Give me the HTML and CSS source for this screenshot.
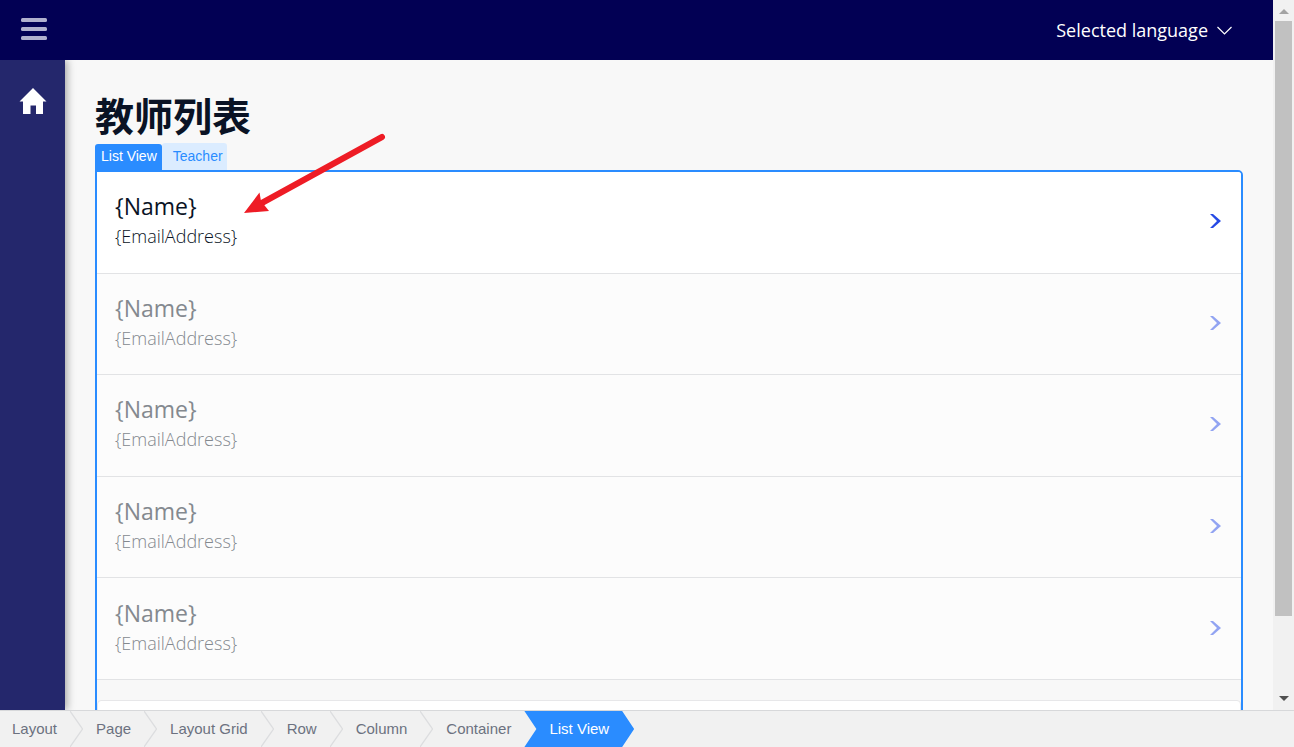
FILE: index.html
```html
<!DOCTYPE html>
<html lang="zh-CN">
<head>
<meta charset="utf-8">
<meta name="viewport" content="width=device-width, initial-scale=1">
<title>教师列表</title>
<link rel="stylesheet" href="styles.css">
</head>
<body>
<div class="editor">
  <div class="viewport">
    <div class="page">
      <header class="topbar">
        <button class="icon-button" type="button" aria-label="Toggle menu">
          <svg width="26" height="24" viewBox="0 0 26 24" fill="#b0b0ce"><rect x="0" y="0" width="26" height="4" rx="1.5"/><rect x="0" y="9" width="26" height="4" rx="1.5"/><rect x="0" y="18" width="26" height="4" rx="1.5"/></svg>
        </button>
        <button class="language" type="button">Selected language
          <svg width="16" height="10" viewBox="0 0 16 10" fill="none" stroke="#fff" stroke-width="1.2"><path d="M1.500 2l7 7 7-7"/></svg>
        </button>
      </header>
      <div class="body">
        <nav class="sidebar" aria-label="Main">
          <a class="home" href="#" aria-label="Home">
            <svg width="28" height="28" viewBox="0 0 28 28" fill="#fff"><path d="M14 1L27.5 14.5H24V27H17V18.500H11.500V27H4V14.500H.5z"/></svg>
          </a>
        </nav>
        <main class="content">
          <h1 class="title">教师列表</h1>
          <div class="tags"><span class="tag tag-type">List View</span><span class="tag tag-entity">Teacher</span></div>
          <div class="list-view">
            <ul class="rows">
              <li class="row"><div class="details"><p class="name">{Name}</p><p class="email">{EmailAddress}</p></div><svg class="chevron" width="12" height="16" viewBox="0 0 12 16"><path d="M1 1h3l8 7-8 7H1l7-7z"/></svg></li>
              <li class="row sample"><div class="details"><p class="name">{Name}</p><p class="email">{EmailAddress}</p></div><svg class="chevron" width="12" height="16" viewBox="0 0 12 16"><path d="M1 1h3l8 7-8 7H1l7-7z"/></svg></li>
              <li class="row sample"><div class="details"><p class="name">{Name}</p><p class="email">{EmailAddress}</p></div><svg class="chevron" width="12" height="16" viewBox="0 0 12 16"><path d="M1 1h3l8 7-8 7H1l7-7z"/></svg></li>
              <li class="row sample"><div class="details"><p class="name">{Name}</p><p class="email">{EmailAddress}</p></div><svg class="chevron" width="12" height="16" viewBox="0 0 12 16"><path d="M1 1h3l8 7-8 7H1l7-7z"/></svg></li>
              <li class="row sample"><div class="details"><p class="name">{Name}</p><p class="email">{EmailAddress}</p></div><svg class="chevron" width="12" height="16" viewBox="0 0 12 16"><path d="M1 1h3l8 7-8 7H1l7-7z"/></svg></li>
            </ul>
            <div class="load-more"></div>
          </div>
        </main>
      </div>
      <svg class="pointer" width="144" height="84" viewBox="0 0 144 84"><path d="M140 5L18 72" stroke="#ee1c25" stroke-width="6" stroke-linecap="round"/><path d="M2 81L17.500 60.500L19 69L27 79z" fill="#ee1c25"/></svg>
    </div>
    <div class="scrollbar" aria-hidden="true">
      <svg width="10" height="5" viewBox="0 0 10 5"><path d="M0 5L5 0l5 5z" fill="#a3a3a3"/></svg>
      <div class="track"><div class="thumb"></div></div>
      <svg width="10" height="5" viewBox="0 0 10 5"><path d="M0 0h10L5 5z" fill="#505050"/></svg>
    </div>
  </div>
  <nav class="crumbs" aria-label="Breadcrumb">
    <a class="crumb" href="#">Layout</a><svg class="sep" viewBox="0 0 13 36"><path d="M0 0l12.500 18L0 36"/></svg>
    <a class="crumb" href="#">Page</a><svg class="sep" viewBox="0 0 13 36"><path d="M0 0l12.500 18L0 36"/></svg>
    <a class="crumb" href="#">Layout Grid</a><svg class="sep" viewBox="0 0 13 36"><path d="M0 0l12.500 18L0 36"/></svg>
    <a class="crumb" href="#">Row</a><svg class="sep" viewBox="0 0 13 36"><path d="M0 0l12.500 18L0 36"/></svg>
    <a class="crumb" href="#">Column</a><svg class="sep" viewBox="0 0 13 36"><path d="M0 0l12.500 18L0 36"/></svg>
    <a class="crumb" href="#">Container</a>
    <a class="crumb current" href="#" aria-current="page">List View</a>
  </nav>
</div>
</body>
</html>
```
FILE: styles.css
```css
* { box-sizing: border-box; }

body {
  margin: 0;
  font-family: "Open Sans", "Noto Sans CJK SC", sans-serif;
  color: #0a1325;
}

h1, p, ul { margin: 0; padding: 0; }
a { text-decoration: none; }
svg { display: block; flex: none; }
button { border: 0; padding: 0; background: none; font: inherit; cursor: pointer; }

.editor { display: flex; flex-direction: column; height: 100vh; }
.viewport { display: flex; flex: 1; min-height: 0; }

.page {
  position: relative;
  display: flex;
  flex-direction: column;
  flex: 1;
  overflow: hidden;
  background: #f8f8f8;
}

.topbar {
  z-index: 1;
  display: flex;
  flex: none;
  align-items: center;
  justify-content: space-between;
  height: 60px;
  padding: 0 41px 0 21px;
  background: #020054;
}
.language {
  display: flex;
  align-items: center;
  gap: 8px;
  color: #fff;
  font-size: 18px;
  line-height: 24px;
}

.body { display: flex; flex: 1; min-height: 0; }
.sidebar {
  flex: none;
  width: 65px;
  padding: 27px 19px;
  background: #24276c;
  box-shadow: 2px 0 8px rgba(0, 0, 0, 0.35);
}
.home { display: block; }

.content { flex: 1; padding: 30px 30px 0; }
.title { margin-bottom: 2px; font-size: 39px; line-height: 51px; font-weight: 700; }

.tags { display: flex; align-items: flex-end; font: 14px/26px "Liberation Sans", Arial, sans-serif; }
.tag-type { padding: 0 5px 2px 6px; border-radius: 3px 3px 0 0; background: #2a8cff; color: #fff; line-height: 24px; }
.tag-entity { padding: 0 4px 1px 11px; border-radius: 3px 3px 0 0; background: #dbecff; color: #2a8cff; }

.list-view {
  border: 2px solid #2a8cff;
  border-radius: 0 5px 0 0;
}
.rows {
  display: grid;
  grid-auto-rows: 1fr;
  height: 508px;
  list-style: none;
}
.row {
  display: flex;
  align-items: center;
  justify-content: space-between;
  padding: 0 20px 2px 18px;
  border-bottom: 1px solid #e2e3e5;
  background: #fff;
}
.row:first-child { border-radius: 0 3px 0 0; }
.details { padding-bottom: 2px; }
.name { font-size: 23px; line-height: 32px; font-weight: 500; }
.email { font-size: 18px; line-height: 28px; font-weight: 300; }
.chevron { fill: #264ae5; }
.sample { background: #fcfcfc; color: #84898f; }
.sample .chevron { fill: #92a4f2; }
.load-more {
  height: 40px;
  margin-top: 20px;
  border: 1px solid #e7e7e9;
  border-radius: 4px;
  background: #fff;
}

.pointer { position: absolute; left: 242px; top: 132px; }

.scrollbar {
  display: flex;
  flex-direction: column;
  align-items: center;
  justify-content: space-between;
  width: 21px;
  padding: 9px 2px;
  background: #f1f1f1;
}
.track { flex: 1; align-self: stretch; padding: 7px 0; }
.thumb { height: 89%; background: #c1c1c1; }

.crumbs {
  display: flex;
  flex: none;
  height: 37px;
  padding-right: 12px;
  border-top: 1px solid #d7d8da;
  background: #f1f1f1;
  font: 15px/36px "Liberation Sans", Arial, sans-serif;
}
.crumb { padding: 0 13px; color: #6c7180; white-space: nowrap; }
.crumb:first-child { padding-left: 12px; }
.sep { width: 13px; height: 36px; fill: none; stroke: #dcdddf; stroke-width: 1.3; }
.crumb.current {
  padding: 0 25px;
  background: #2a8cff;
  color: #fff;
  clip-path: polygon(0 0, calc(100% - 12px) 0, 100% 50%, calc(100% - 12px) 100%, 0 100%, 12px 50%);
}
```
